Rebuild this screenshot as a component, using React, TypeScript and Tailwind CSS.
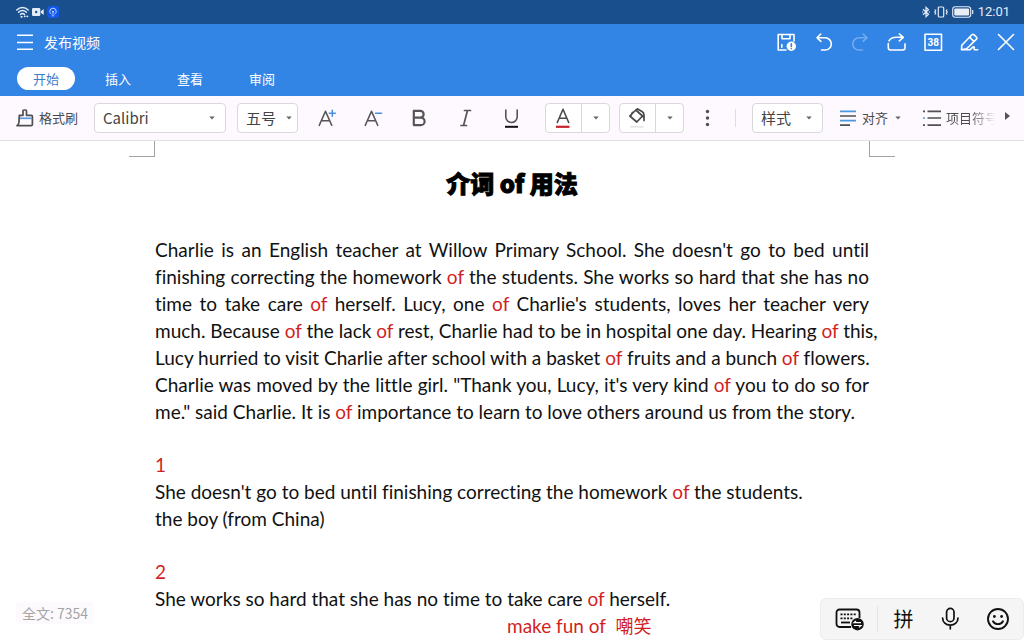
import type { ReactNode } from "react";

const sans = "font-['Noto_Sans_CJK_SC',sans-serif]";

function Caret() {
  return (
    <svg viewBox="0 0 6 4" className="h-1 w-[6px] shrink-0" fill="#666" aria-hidden="true">
      <path d="M.3 .4h5.4L3 3.6z" />
    </svg>
  );
}

function Icon({ children, className = "h-6 w-6" }: { children: ReactNode; className?: string }) {
  return (
    <svg
      viewBox="0 0 24 24"
      className={`shrink-0 ${className}`}
      fill="none"
      stroke="currentColor"
      strokeWidth="1.6"
      strokeLinecap="round"
      strokeLinejoin="round"
      aria-hidden="true"
    >
      {children}
    </svg>
  );
}

function StatusBar() {
  return (
    <div className="flex h-6 shrink-0 items-center justify-between bg-[#1a4f8d] pr-[14px] pl-4 text-[#e3ecf7]">
      <div className="flex items-center gap-[3px]">
        <svg viewBox="0 0 13 12" className="h-3 w-[13px]" fill="none" stroke="currentColor" strokeWidth="1.5" strokeLinecap="round" aria-hidden="true">
          <path d="M.8 4C4 .6 9 .6 12.200 4M2.600 6.300c2.200-2.300 5.600-2.300 7.800 0M4.500 8.500c1.100-1.200 2.900-1.200 4 0" />
          <path d="M5.300 10.800h.5M8.600 10.300h.2M11.200 10.300h.2" strokeWidth="1.800" />
        </svg>
        <svg viewBox="0 0 12 8" className="h-2 w-3" aria-hidden="true">
          <rect width="8.300" height="8" rx="1.300" fill="currentColor" />
          <path d="M8.800 3.200 11.700 1v6L8.800 4.800z" fill="currentColor" />
          <circle cx="4.200" cy="4" r="1.200" fill="#1a4f8d" />
        </svg>
        <svg viewBox="0 0 12 12" className="h-3 w-3" fill="none" stroke="#cfe0ff" strokeWidth=".9" aria-hidden="true">
          <rect width="12" height="12" rx="3" fill="#1257ea" stroke="none" />
          <path d="M4.500 8.300C3.400 7.500 2.800 6.600 2.800 5.400a3.200 3.200 0 0 1 6.400 0c0 1.200-.6 2.100-1.700 2.900M4.800 9.800h2.400M6 8.500V5.200M4.800 5l1.200 1 1.200-1" />
        </svg>
      </div>
      <div className="flex items-center">
        <svg viewBox="0 0 8 12" className="h-3 w-2" fill="none" stroke="currentColor" strokeWidth="1.200" aria-hidden="true">
          <path d="M1 3.300 6.500 8.300 4 10.700V1.300l2.500 2.400L1 8.700M0 6h1.200M6.800 6H8" />
        </svg>
        <svg viewBox="0 0 14 12" className="ml-1 h-3 w-[14px]" fill="none" stroke="currentColor" strokeWidth="1.200" aria-hidden="true">
          <rect x="4.300" y="1" width="5.400" height="10" rx="1" />
          <path d="M.8 3.500l.9 1.200-.9 1.300.9 1.300-.9 1.200M13.200 3.500l-.9 1.200.9 1.300-.9 1.300.9 1.200" />
        </svg>
        <svg viewBox="0 0 22 12" className="ml-1 h-3 w-[22px]" aria-hidden="true">
          <rect x=".7" y=".8" width="18" height="10.400" rx="2.500" fill="none" stroke="currentColor" strokeWidth="1.100" />
          <rect x="2.300" y="2.500" width="14.800" height="7" rx="1.200" fill="#e8eef8" />
          <path d="M20.700 4v4" stroke="currentColor" strokeWidth="1.200" />
        </svg>
        <span className="ml-1 font-[Roboto,sans-serif] text-[13px] leading-6">12:01</span>
      </div>
    </div>
  );
}

function HeaderButton({ label, children, className = "" }: { label: string; children: ReactNode; className?: string }) {
  return (
    <button type="button" aria-label={label} className={className}>
      <Icon>{children}</Icon>
    </button>
  );
}

function Header() {
  return (
    <header className="h-[72px] shrink-0 bg-[#3385e5] text-white">
      <div className="flex h-9 items-center justify-between pr-[6px] pl-[17px]">
        <div className="flex items-center gap-[11px]">
          <button type="button" aria-label="菜单">
            <svg viewBox="0 0 16 16" className="h-4 w-4" stroke="currentColor" strokeWidth="1.400" aria-hidden="true">
              <path d="M0 1.200h16M0 8.500h16M0 15.300h16" />
            </svg>
          </button>
          <h1 className="text-sm leading-5">发布视频</h1>
        </div>
        <div className="flex w-[243px] items-center justify-between">
          <HeaderButton label="保存">
            <path d="M19 11V4.500H3.200V20H11" />
            <path d="M7 4.500v4.300h8V4.500M6.800 14.500v2.700" />
            <circle cx="16.300" cy="16.300" r="4.700" fill="#fff" stroke="none" />
            <path d="M16.300 13.800v2.600M16.300 18.500v.1" stroke="#3385e5" />
          </HeaderButton>
          <HeaderButton label="撤销">
            <path d="M5 7.800h8.200a6.100 6.100 0 0 1 0 12.200H9.500M8.800 4 5 7.800l3.900 3.500" />
          </HeaderButton>
          <HeaderButton label="重做" className="opacity-30">
            <path d="M19 7.800h-8.200a6.100 6.100 0 0 0 0 12.200h3.700M15.200 4 19 7.800l-3.900 3.500" />
          </HeaderButton>
          <HeaderButton label="分享">
            <path d="M3.300 13.500v4.300c0 1.300.8 2.200 2.200 2.200h12.300c1.400 0 2.200-.9 2.200-2.200v-4.100M4 10.800C5.500 8.200 8.500 7.300 11.500 7.300h6.600M14.300 3.900l4 3.400-4 3.500" />
          </HeaderButton>
          <HeaderButton label="页面">
            <rect x="4" y="4.200" width="16.500" height="16" />
            <text x="12.200" y="16" textAnchor="middle" fontSize="10" fontWeight="700" fill="#fff" stroke="none" fontFamily="Roboto, sans-serif">38</text>
          </HeaderButton>
          <HeaderButton label="编辑">
            <path d="M3.500 19.800l.3-4.600L13.900 4.700c.6-.6 1.300-.6 1.900 0l2.700 2.500c.6.600.6 1.300 0 1.900L8.600 18.800zM11.500 7.200l4.500 4.300M3.500 19.800h8.300l3-2.600c.9-.7 1.800-.2 1.400.8-.3 1.200-.2 1.800 1 1.800h2.500" />
          </HeaderButton>
          <HeaderButton label="关闭">
            <path d="M4.500 4.500l15 15M19.500 4.500l-15 15" />
          </HeaderButton>
        </div>
      </div>
      <nav className="flex items-center gap-[14px] pt-[7px] pl-[17px] text-[13px] leading-[23px]">
        <button type="button" className="w-[58px] rounded-full bg-white text-[#3c7dc8]">开始</button>
        <button type="button" className="w-[58px]">插入</button>
        <button type="button" className="w-[58px]">查看</button>
        <button type="button" className="w-[58px]">审阅</button>
      </nav>
    </header>
  );
}

function Select({ label, value, width, caret = "right-[10px]" }: { label: string; value: string; width: string; caret?: string }) {
  return (
    <div className={`relative flex h-[30px] shrink-0 items-center rounded border border-[#d9d8da] bg-white ${width}`}>
      <select aria-label={label} defaultValue={value} className="h-full w-full appearance-none bg-transparent pl-2 text-[15px] text-[#444] outline-none">
        <option>{value}</option>
      </select>
      <span className={`pointer-events-none absolute flex ${caret}`}>
        <Caret />
      </span>
    </div>
  );
}

function SplitButton({ label, children }: { label: string; children: ReactNode }) {
  return (
    <div className="flex h-[30px] w-[65px] shrink-0 rounded border border-[#d9d8da] bg-white text-[#4a4a4a]">
      <button type="button" aria-label={label} className="flex w-[36px] items-center justify-center border-r border-[#d9d8da]">
        {children}
      </button>
      <button type="button" aria-label={`${label}选项`} className="flex flex-1 items-center justify-center">
        <Caret />
      </button>
    </div>
  );
}

function FormatButton({ label, children }: { label: string; children: ReactNode }) {
  return (
    <button type="button" aria-label={label} className="flex w-[46px] shrink-0 justify-center">
      <Icon>{children}</Icon>
    </button>
  );
}

function Toolbar() {
  return (
    <div className="flex h-[45px] shrink-0 items-center overflow-hidden border-b border-[#e2e0e3] bg-[#fdf9fe] pl-4 text-[#4a4a4a]">
      <button type="button" className="flex w-[78px] shrink-0 items-center gap-[5px] text-[13px]">
        <svg viewBox="0 0 18 18" className="h-[18px] w-[18px]" fill="none" stroke="#505050" strokeWidth="1.700" strokeLinejoin="round" aria-hidden="true">
          <path d="M3 9.300h12.500" stroke="#5a9be6" />
          <path d="M3.300 6.300H7V2c0-.7.300-1 1-1h1.500c.7 0 1 .3 1 1v4.300h4.700c.8 0 1.200.4 1.200 1.200v7.800c0 .9-.4 1.400-1.300 1.400H1c1.300-.9 2-2 2-3.700z" />
        </svg>
        格式刷
      </button>
      <Select label="字体" value="Calibri" width="w-[132px]" />
      <div className="w-[11px] shrink-0" />
      <Select label="字号" value="五号" width="w-[61px]" caret="right-[5px]" />
      <div className="ml-[6px] flex text-[#555]">
        <FormatButton label="增大字号">
          <path d="M4.300 19.300 10.500 5.300l6.200 14M6.300 14.800h8.400" />
          <path d="M14.300 7.300h6M17.300 4.400v5.800" stroke="#4a90e2" />
        </FormatButton>
        <FormatButton label="减小字号">
          <path d="M4.300 19.300 10.500 5.300l6.200 14M6.300 14.800h8.400" />
          <path d="M14.500 7.300h6" stroke="#4a90e2" />
        </FormatButton>
        <FormatButton label="加粗">
          <path d="M6.800 4.800h6.400a3.400 3.400 0 0 1 0 6.900H6.800zM6.800 11.700h7.100a3.700 3.700 0 0 1 0 7.400H6.800z" strokeWidth="2.200" />
        </FormatButton>
        <FormatButton label="斜体">
          <path d="M11.500 4.500h6M8 19.500h5.500M14.500 4.500l-4 15" strokeWidth="1.700" />
        </FormatButton>
        <FormatButton label="下划线">
          <path d="M6.800 4v6.800a5.700 5.700 0 0 0 11.400 0V4" />
          <path d="M6 20.800h13" stroke="#111" strokeWidth="2" strokeLinecap="butt" />
        </FormatButton>
      </div>
      <div className="ml-[11px] flex gap-[9px]">
        <SplitButton label="字体颜色">
          <Icon>
            <path d="M5.300 16.500 11 3.300l5.700 13.200M7.200 12.200h7.600" />
            <path d="M4 20.800h13.500" stroke="#c8222b" strokeWidth="2.200" strokeLinecap="butt" />
          </Icon>
        </SplitButton>
        <SplitButton label="填充颜色">
          <Icon>
            <path d="M9.800 4 16.500 10l-5.700 6-7-6zM9.800 4l2-1.200M6.500 6.500 5.200 9M12 3.200l4 2.400c1.300.8 2 1.600 2 3.400v5.500M16.500 10l1.200 1.500" strokeWidth="1.700" />
            <path d="M4 20.800h13.500" stroke="#e3e3e3" strokeWidth="1.500" strokeLinecap="butt" />
          </Icon>
        </SplitButton>
      </div>
      <button type="button" aria-label="更多" className="ml-[17px] shrink-0">
        <svg viewBox="0 0 12 18" className="h-[18px] w-3" fill="#505050" aria-hidden="true">
          <circle cx="6.500" cy="2.500" r="1.700" />
          <circle cx="6.500" cy="9" r="1.700" />
          <circle cx="6.500" cy="15.500" r="1.700" />
        </svg>
      </button>
      <div className="ml-[22px] h-[18px] w-px shrink-0 bg-[#e0dde1]" />
      <div className="w-4 shrink-0" />
      <Select label="样式" value="样式" width="w-[71px]" />
      <button type="button" className="ml-4 flex shrink-0 items-center text-[13px]">
        <svg viewBox="0 0 18 18" className="mr-[5px] h-[18px] w-[18px]" strokeWidth="1.700" aria-hidden="true">
          <path d="M1 2.300h16M1 11.700h16" stroke="#4a98e0" />
          <path d="M1 7h16M1 16.200h10" stroke="#505050" />
        </svg>
        对齐
        <span className="ml-[7px] flex"><Caret /></span>
      </button>
      <button type="button" className="ml-[22px] flex min-w-0 items-center overflow-hidden text-[13px] whitespace-nowrap">
        <svg viewBox="0 0 18 18" className="mr-[5px] h-[18px] w-[18px] shrink-0" stroke="#505050" strokeWidth="1.700" aria-hidden="true">
          <path d="M4.500 2.300H18M4.500 9H18M4.500 16.200H18M0 2.300h2M0 16.200h2" />
          <path d="M0 9h2" stroke="#4a98e0" />
        </svg>
        <span className="w-[52px] bg-linear-to-r from-[#4a4a4a] from-45% to-transparent to-95% bg-clip-text text-transparent">项目符号</span>
      </button>
      <button type="button" aria-label="向右滚动" className="mr-[14px] ml-auto shrink-0 pb-1">
        <svg viewBox="0 0 5 8" className="h-2 w-[5px]" fill="#555" aria-hidden="true">
          <path d="M0 0l5 4-5 4z" />
        </svg>
      </button>
    </div>
  );
}

function Of() {
  return <span className="text-[#d21f1f]">of</span>;
}

function Line({ children }: { children: ReactNode }) {
  return <span className="block whitespace-nowrap [text-align-last:justify]">{children}</span>;
}

function Document() {
  return (
    <main className="flex min-h-0 flex-1 flex-col items-center overflow-hidden bg-white">
      <div className="flex h-4 w-full max-w-[766px] shrink-0 justify-between">
        <div className="w-[26px] border-r border-b border-[#a3a3a3]" />
        <div className="w-[26px] border-b border-l border-[#a3a3a3]" />
      </div>
      <article className="w-full max-w-[714px] font-[Lato,'Noto_Sans_CJK_SC',sans-serif] text-[19px] leading-[27px] text-[#111] [font-variant-ligatures:none]">
        <h2 className="mt-2 text-center font-['Noto_Sans_CJK_SC',sans-serif] text-2xl leading-9 font-black text-black [-webkit-text-stroke:1px_black]">介词 of 用法</h2>
        <p className="mt-[35px]">
          <Line>Charlie is an English teacher at Willow Primary School. She doesn't go to bed until</Line>
          <Line>finishing correcting the homework <Of /> the students. She works so hard that she has no</Line>
          <Line>time to take care <Of /> herself. Lucy, one <Of /> Charlie's students, loves her teacher very</Line>
          <Line>much. Because <Of /> the lack <Of /> rest, Charlie had to be in hospital one day. Hearing <Of /> this,</Line>
          <Line>Lucy hurried to visit Charlie after school with a basket <Of /> fruits and a bunch <Of /> flowers.</Line>
          <Line>Charlie was moved by the little girl. "Thank you, Lucy, it's very kind <Of /> you to do so for</Line>
          <span className="block">me." said Charlie. It is <Of /> importance to learn to love others around us from the story.</span>
        </p>
        <p className="mt-[26px] text-[#d21f1f]">1</p>
        <p>She doesn't go to bed until finishing correcting the homework <Of /> the students.</p>
        <p>the boy (from China)</p>
        <p className="mt-[26px] text-[#d21f1f]">2</p>
        <p>She works so hard that she has no time to take care <Of /> herself.</p>
        <p className="pl-[352px] whitespace-pre text-[#d21f1f]">make fun of  <span className="text-lg leading-[26px]">嘲笑</span></p>
      </article>
    </main>
  );
}

function InputBar() {
  return (
    <div className="absolute right-0 bottom-0 flex h-[42px] w-[204px] items-center rounded-md border border-[#ececec] bg-[#f6f5f6] text-[#111]">
      <button type="button" aria-label="键盘" className="flex w-14 justify-center">
        <svg viewBox="0 0 30 24" className="h-6 w-[30px]" fill="none" stroke="currentColor" strokeWidth="1.800" aria-hidden="true">
          <path d="M17 20H5.500a3 3 0 0 1-3-3V5.500a3 3 0 0 1 3-3h17a3 3 0 0 1 3 3V11" />
          <path d="M6.500 7.300h15.500M6.500 11.300h12.500" strokeDasharray="2 1.300" />
          <path d="M7 15.500h9" />
          <circle cx="23.500" cy="17.200" r="6.200" fill="currentColor" stroke="none" />
          <path d="M27 15.700h-7l2-1.700M20 18.500h7l-2 1.900" stroke="#fff" strokeWidth="1.200" />
        </svg>
      </button>
      <div className="h-[26px] w-px bg-[#e6e5e6]" />
      <button type="button" className="w-[51px] text-xl leading-6">拼</button>
      <button type="button" aria-label="语音" className="flex w-[44px] justify-center">
        <Icon>
          <rect x="7.600" y="1.400" width="7.400" height="13.200" rx="3.700" strokeWidth="1.700" />
          <path d="M3.600 11c0 4.200 3.200 7.100 7.700 7.100S19 15.200 19 11M11.300 18.300v3.500" strokeWidth="1.700" />
        </Icon>
      </button>
      <button type="button" aria-label="表情" className="flex w-[50px] justify-center">
        <Icon>
          <circle cx="12" cy="12" r="10" strokeWidth="1.900" />
          <path d="M7 14.300c2 3.800 8 3.800 10 0" strokeWidth="1.900" />
          <circle cx="8.400" cy="9.500" r="1.400" fill="currentColor" stroke="none" />
          <circle cx="15.600" cy="9.500" r="1.400" fill="currentColor" stroke="none" />
        </Icon>
      </button>
    </div>
  );
}

export default function App() {
  return (
    <div className={`relative flex h-screen flex-col overflow-hidden bg-white ${sans}`}>
      <StatusBar />
      <Header />
      <Toolbar />
      <Document />
      <div className="absolute bottom-4 left-4 rounded bg-[#fdfafd] px-[6px] text-[14px] leading-[22px] text-[#a5a5a5]">全文: 7354</div>
      <InputBar />
    </div>
  );
}
